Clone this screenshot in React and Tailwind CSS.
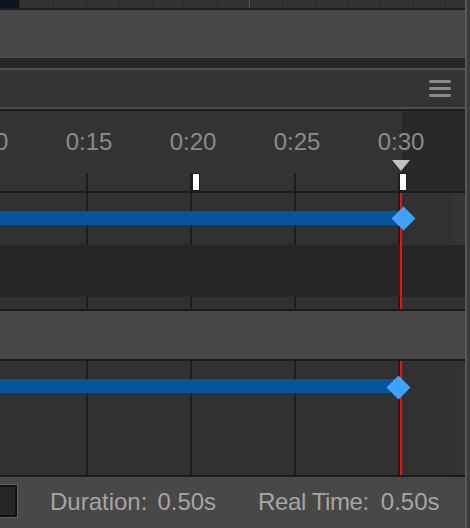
import React from "react";

// grid line x positions (left edge of a 2px line), one every 5 seconds
const gridLines = [-18, 86, 190, 294, 398];
const labels = ["0:10", "0:15", "0:20", "0:25", "0:30"];
const stripLines = [19, 53, 86, 119, 152, 183, 217, 249, 282, 315, 347, 380, 413, 445];
const PLAYHEAD = 400;

function GridLines({ className = "" }) {
  return gridLines.map((x) => (
    <div
      key={x}
      className={`absolute w-[2px] bg-[#1d1d1d] ${className}`}
      style={{ left: x }}
    />
  ));
}

function Playhead() {
  return (
    <div
      className="absolute top-0 bottom-0 w-[2px] bg-[#ff0a0a]"
      style={{ left: PLAYHEAD }}
    />
  );
}

function Keyframe({ x, y }) {
  return (
    <div
      className="absolute w-[17px] h-[17px] bg-[#3fa2ff] rotate-45"
      style={{ left: x - 8.5, top: y - 8.5 }}
    />
  );
}

function Marker({ x }) {
  return (
    <div
      className="absolute top-[62px] h-[18px] w-[8px] bg-white border border-[#1e1e1e]"
      style={{ left: x }}
    />
  );
}

export default function App() {
  return (
    <div
      className="w-[470px] h-[528px] overflow-hidden flex bg-[#3a3a3a]"
      style={{ fontFamily: '"Liberation Sans", Arial, sans-serif' }}
    >
      <div className="w-[465px] flex flex-col">
        {/* top strip of the panel above */}
        <div className="relative h-[8px] bg-[#323232]">
          <div className="absolute left-0 top-0 h-full w-[19px] bg-[#0c1620]" />
          {stripLines.map((x, i) => (
            <div
              key={x}
              className={`absolute top-0 h-full w-px ${i === 7 ? "bg-[#555]" : "bg-[#2a2a2a]"}`}
              style={{ left: x }}
            />
          ))}
        </div>
        <div className="h-[2px] bg-[#1e1e1e]" />
        <div className="h-[48px] bg-[#484848] border-b border-[#525252]" />
        <div className="h-[10px] bg-[#262626]" />

        {/* header bar */}
        <div className="h-[41px] bg-[#343434] border-y-2 border-[#4b4b4b] flex items-center justify-end pr-[14px]">
          <div className="flex flex-col gap-[4px]">
            <div className="w-[22px] h-[3px] rounded-full bg-[#8a8a8a]" />
            <div className="w-[22px] h-[3px] rounded-full bg-[#8a8a8a]" />
            <div className="w-[22px] h-[3px] rounded-full bg-[#8a8a8a]" />
          </div>
        </div>
        <div className="h-[2px] bg-[#1e1e1e]" />

        {/* ruler */}
        <div className="relative h-[80px] bg-[#333] overflow-hidden">
          <div className="absolute top-0 bottom-0 left-[402px] right-0 bg-[#292929]" />
          {labels.map((t, i) => (
            <div
              key={t}
              className="absolute top-[19px] w-[80px] text-center text-[24px] leading-[24px] text-[#8b8b8b]"
              style={{ left: gridLines[i] + 3 - 40 }}
            >
              {t}
            </div>
          ))}
          <GridLines className="top-[62px] bottom-0" />
          <Marker x={192} />
          <Marker x={399} />
          <div className="absolute left-[392px] top-[49px] w-0 h-0 border-l-[9px] border-r-[9px] border-t-[11px] border-l-transparent border-r-transparent border-t-[#c2c2c2]" />
        </div>
        <div className="h-[2px] bg-[#1c1c1c]" />

        {/* rows */}
        <div className="relative">
          <div className="relative h-[52px] bg-[#313131]">
            <div className="absolute top-0 bottom-0 left-[452px] right-0 bg-[#343434]" />
            <GridLines className="top-0 bottom-0" />
            <div className="absolute left-0 top-[18px] h-[14px] w-[402px] bg-[#02549b]" />
          </div>
          <div className="h-[52px] bg-[#262626]" />
          <div className="relative h-[12px] bg-[#313131]">
            <GridLines className="top-0 bottom-0" />
          </div>
          <Playhead />
          <Keyframe x={403} y={25} />
        </div>
        <div className="h-[2px] bg-[#1c1c1c]" />
        <div className="h-[48px] bg-[#484848]" />
        <div className="h-[2px] bg-[#1c1c1c]" />

        {/* track */}
        <div className="relative h-[114px] bg-[#313131]">
          <div className="absolute top-0 bottom-0 left-[452px] right-0 bg-[#333]" />
          <GridLines className="top-0 bottom-0" />
          <div className="absolute left-0 top-[18px] h-[14px] w-[398px] bg-[#02549b]" />
          <Playhead />
          <Keyframe x={398} y={26} />
        </div>
        <div className="h-[2px] bg-[#1c1c1c]" />

        {/* footer */}
        <div className="flex-1 bg-[#484848] flex items-start pt-[7px]">
          <div className="w-[18px] h-[34px] border border-[#5c5c5c] border-l-0">
            <div className="w-full h-full bg-[#262626] border-2 border-[#111] border-l-0" />
          </div>
          <div className="flex ml-[32px] mt-[6px] text-[24px] leading-[24px] text-[#a5a5a5]">
            <span>Duration:</span>
            <span className="ml-[10px]">0.50s</span>
            <span className="ml-[42px] tracking-[-0.4px]">Real Time:</span>
            <span className="ml-[12px]">0.50s</span>
          </div>
        </div>
      </div>
      <div className="w-[2px] bg-[#585858]" />
    </div>
  );
}
